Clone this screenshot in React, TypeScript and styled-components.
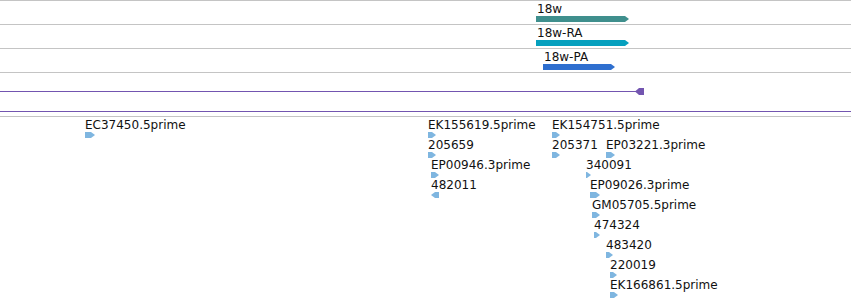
import React from 'react';
import styled, { createGlobalStyle } from 'styled-components';

const GlobalStyle = createGlobalStyle`
  body {
    margin: 0;
    background: #ffffff;
    font-family: "DejaVu Sans", sans-serif;
  }
`;

const Page = styled.div`
  width: 851px;
  height: 300px;
  overflow: hidden;
  border-top: 1px solid #c4c4c4;
  box-sizing: border-box;
`;

const Track = styled.div<{ $height: number }>`
  position: relative;
  height: ${ (p) => p.$height }px;
  border-bottom: 1px solid #c4c4c4;
`;

const Feature = styled.div`
  position: absolute;
  display: flex;
  flex-direction: column;
  align-items: flex-start;
`;

const Label = styled.span`
  font-size: 12px;
  line-height: 14px;
  color: #111;
  white-space: nowrap;
`;

const TranscriptLabel = styled(Label)`
  padding-top: 1px;
  margin-left: 1px;
`;

const Line = styled.div<{ $color: string }>`
  position: absolute;
  left: 0;
  height: 1px;
  background: ${ (p) => p.$color };
`;

const Glyph = styled.svg`
  display: block;
`;

type Dir = 'right' | 'left';

const Arrow = ({ width, height, color, dir }: { width: number; height: number; color: string; dir: Dir }) => {
  const tip = Math.min(4, width);
  const mid = height / 2;
  const points = dir === 'right'
    ? `0,0 ${ width - tip },0 ${ width },${ mid } ${ width - tip },${ height } 0,${ height }`
    : `${ tip },0 ${ width },0 ${ width },${ height } ${ tip },${ height } 0,${ mid }`;
  return (
    <Glyph width={ width } height={ height } viewBox={ `0 0 ${ width } ${ height }` }>
      <polygon points={ points } fill={ color } />
    </Glyph>
  );
};

const transcripts = [
  { name: '18w', x: 536, width: 93, color: '#3f8f8d' },
  { name: '18w-RA', x: 536, width: 93, color: '#06a0be' },
  { name: '18w-PA', x: 543, width: 72, color: '#2f6fcf' },
];

const reads: { name: string; x: number; row: number; w: number; dir: Dir }[] = [
  { name: 'EC37450.5prime', x: 85, row: 0, w: 10, dir: 'right' },
  { name: 'EK155619.5prime', x: 428, row: 0, w: 8, dir: 'right' },
  { name: '205659', x: 428, row: 1, w: 8, dir: 'right' },
  { name: 'EP00946.3prime', x: 431, row: 2, w: 8, dir: 'right' },
  { name: '482011', x: 431, row: 3, w: 8, dir: 'left' },
  { name: 'EK154751.5prime', x: 552, row: 0, w: 8, dir: 'right' },
  { name: '205371', x: 552, row: 1, w: 8, dir: 'right' },
  { name: 'EP03221.3prime', x: 606, row: 1, w: 9, dir: 'right' },
  { name: '340091', x: 586, row: 2, w: 5, dir: 'right' },
  { name: 'EP09026.3prime', x: 590, row: 3, w: 10, dir: 'right' },
  { name: 'GM05705.5prime', x: 592, row: 4, w: 8, dir: 'right' },
  { name: '474324', x: 594, row: 5, w: 6, dir: 'right' },
  { name: '483420', x: 606, row: 6, w: 7, dir: 'right' },
  { name: '220019', x: 610, row: 7, w: 7, dir: 'right' },
  { name: 'EK166861.5prime', x: 610, row: 8, w: 8, dir: 'right' },
];

const App = () => (
  <>
    <GlobalStyle />
    <Page>
      {transcripts.map((t) => (
        <Track key={ t.name } $height={ 23 }>
          <Feature style={ { left: t.x, top: 0 } }>
            <TranscriptLabel>{t.name}</TranscriptLabel>
            <Arrow width={ t.width } height={ 6 } color={ t.color } dir="right" />
          </Feature>
        </Track>
      ))}
      <Track $height={ 43 }>
        <Line $color="#7355b0" style={ { top: 18, width: 637 } } />
        <Feature style={ { left: 635, top: 15 } }>
          <Arrow width={ 9 } height={ 7 } color="#7355b0" dir="left" />
        </Feature>
        <Line $color="#7355b0" style={ { top: 38, width: 851 } } />
      </Track>
      <Track $height={ 200 }>
        {reads.map((r) => (
          <Feature key={ r.name } style={ { left: r.x, top: 1 + r.row * 20 } }>
            <Label>{r.name}</Label>
            <Arrow width={ r.w } height={ 6 } color="#7fb6e0" dir={ r.dir } />
          </Feature>
        ))}
      </Track>
    </Page>
  </>
);

export default App;
